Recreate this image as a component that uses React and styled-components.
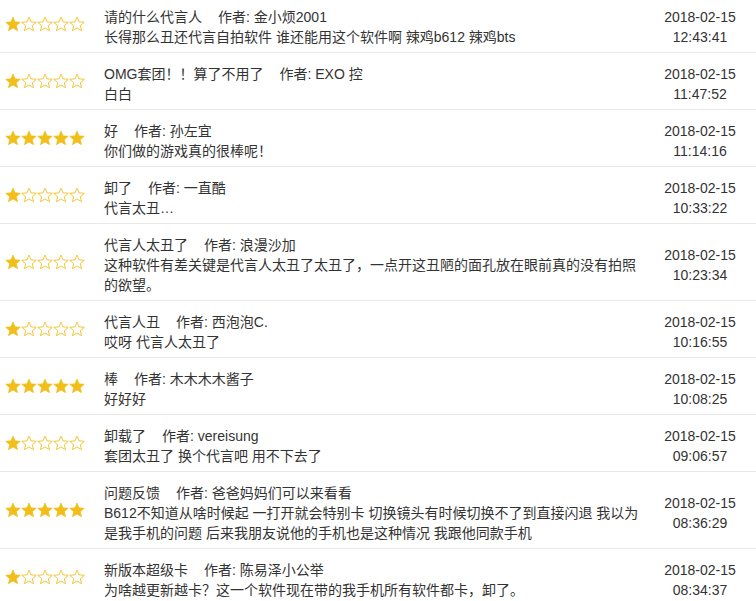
import React from "react";
import styled, { createGlobalStyle } from "styled-components";

const Global = createGlobalStyle`
  html, body { margin: 0; padding: 0; background: #fff; overflow: hidden; }
  body { font-family: "Liberation Sans", "Noto Sans CJK SC", sans-serif; }
`;

const List = styled.div`
  width: 756px;
  display: flex;
  flex-direction: column;
`;

const Row = styled.div`
  display: grid;
  grid-template-columns: 98px 540px 100px;
  column-gap: 6px;
  padding: 11px 6px 5px 0;
  border-bottom: 1px solid #e8e8e8;
  &:first-child { padding-top: 7px; }
`;

const Stars = styled.div`
  display: flex;
  gap: 0;
  padding-left: 5px;
  align-self: center;
  margin-top: -6px;
`;

const Body = styled.div`
  font-size: 14px;
  line-height: 20px;
  color: #333;
`;

const Title = styled.div``;

const Author = styled.span`
  margin-left: 16px;
`;

const DateCol = styled.div`
  align-self: center;
  text-align: center;
  font-size: 14px;
  line-height: 20px;
  color: #333;
`;

const GOLD = "#f2be1a";

const Star = ({ filled }) => (
  <svg width="16" height="16" viewBox="0 0 24 24">
    <path
      d="M12 1.6l3.1 7.2 7.8.6-5.95 5.05 1.9 7.6L12 17.9 5.15 22.05l1.9-7.6L1.1 9.4l7.8-.6z"
      fill={filled ? GOLD : "none"}
      stroke={GOLD}
      strokeWidth={filled ? 1 : 1.3}
      strokeLinejoin="round"
    />
  </svg>
);

const data = [
  { r: 1, t: "请的什么代言人", a: "金小烦2001", c: "长得那么丑还代言自拍软件 谁还能用这个软件啊 辣鸡b612 辣鸡bts", d: "2018-02-15", h: "12:43:41" },
  { r: 1, t: "OMG套团！！算了不用了", a: "EXO 控", c: "白白", d: "2018-02-15", h: "11:47:52" },
  { r: 5, t: "好", a: "孙左宜", c: "你们做的游戏真的很棒呢！", d: "2018-02-15", h: "11:14:16" },
  { r: 1, t: "卸了", a: "一直酷", c: "代言太丑…", d: "2018-02-15", h: "10:33:22" },
  { r: 1, t: "代言人太丑了", a: "浪漫沙加", c: "这种软件有差关键是代言人太丑了太丑了，一点开这丑陋的面孔放在眼前真的没有拍照的欲望。", d: "2018-02-15", h: "10:23:34" },
  { r: 1, t: "代言人丑", a: "西泡泡C.", c: "哎呀 代言人太丑了", d: "2018-02-15", h: "10:16:55" },
  { r: 5, t: "棒", a: "木木木木酱子", c: "好好好", d: "2018-02-15", h: "10:08:25" },
  { r: 1, t: "卸载了", a: "vereisung", c: "套团太丑了 换个代言吧 用不下去了", d: "2018-02-15", h: "09:06:57" },
  { r: 5, t: "问题反馈", a: "爸爸妈妈们可以来看看", c: "B612不知道从啥时候起 一打开就会特别卡 切换镜头有时候切换不了到直接闪退 我以为是我手机的问题 后来我朋友说他的手机也是这种情况 我跟他同款手机", d: "2018-02-15", h: "08:36:29" },
  { r: 1, t: "新版本超级卡", a: "陈易泽小公举", c: "为啥越更新越卡？这一个软件现在带的我手机所有软件都卡，卸了。", d: "2018-02-15", h: "08:34:37" },
];

export default function App() {
  return (
    <>
      <Global />
      <List>
        {data.map((it, i) => (
          <Row key={i}>
            <Stars>
              {[0, 1, 2, 3, 4].map((k) => (
                <Star key={k} filled={k < it.r} />
              ))}
            </Stars>
            <Body>
              <Title>
                {it.t}
                <Author>作者: {it.a}</Author>
              </Title>
              <div>{it.c}</div>
            </Body>
            <DateCol>
              <div>{it.d}</div>
              <div>{it.h}</div>
            </DateCol>
          </Row>
        ))}
      </List>
    </>
  );
}
